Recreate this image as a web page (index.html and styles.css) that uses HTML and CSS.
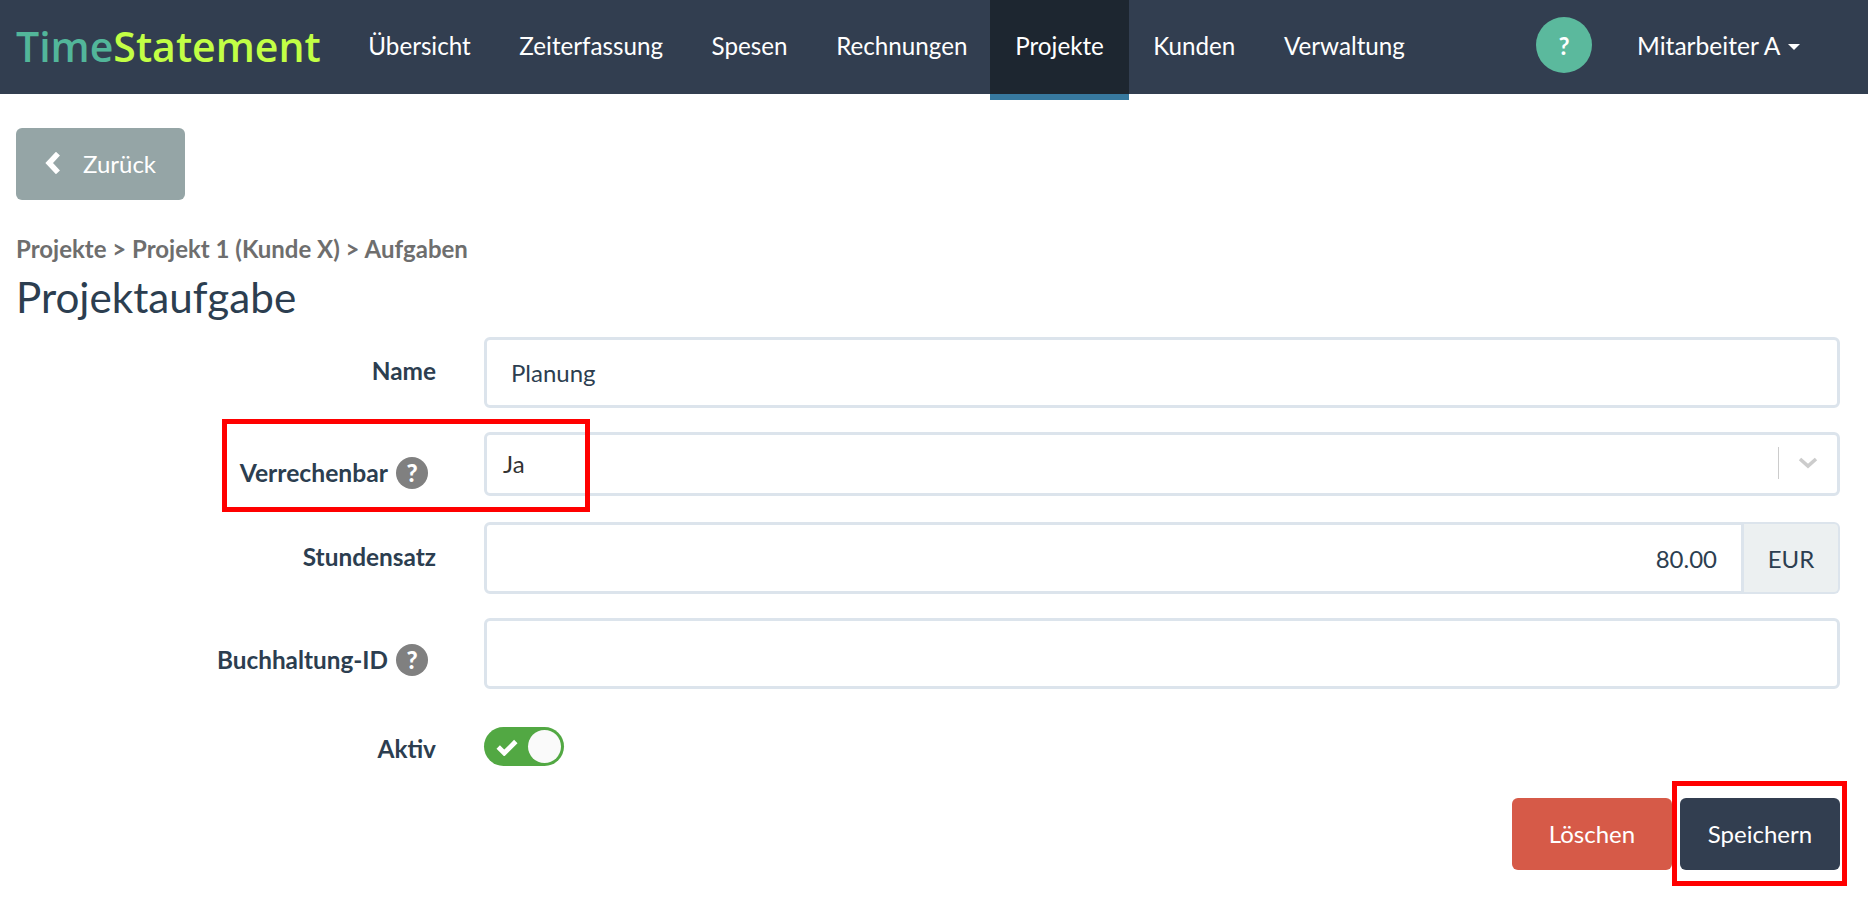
FILE: index.html
```html
<!DOCTYPE html>
<html lang="de">
<head>
<meta charset="utf-8">
<title>TimeStatement</title>
<link rel="stylesheet" href="styles.css">
</head>
<body>
<header class="navbar">
  <a class="brand"><span class="brand-a">Time</span><span class="brand-b">Statement</span></a>
  <nav class="nav">
    <a class="nav-item">Übersicht</a>
    <a class="nav-item">Zeiterfassung</a>
    <a class="nav-item">Spesen</a>
    <a class="nav-item">Rechnungen</a>
    <a class="nav-item active">Projekte</a>
    <a class="nav-item">Kunden</a>
    <a class="nav-item">Verwaltung</a>
  </nav>
  <div class="nav-right">
    <span class="help-round">?</span>
    <a class="user">Mitarbeiter A <span class="caret"></span></a>
  </div>
</header>
<main class="page">
  <a class="btn-back">
    <svg class="back-icon" viewBox="0 0 14 20"><path d="M11.5 1.5 L3.5 10 L11.5 18.5" fill="none" stroke="#fff" stroke-width="5"/></svg>
    <span class="back-text">Zurück</span>
  </a>
  <div class="crumbs">Projekte &gt; Projekt 1 (Kunde X) &gt; Aufgaben</div>
  <h1 class="title">Projektaufgabe</h1>
  <form class="form">
    <div class="row row-name">
      <label class="label">Name</label>
      <div class="control"><input class="input" type="text" value="Planung"></div>
    </div>
    <div class="row row-select">
      <label class="label label-help label-select">Verrechenbar <span class="help-dot">?</span></label>
      <div class="control">
        <div class="select">
          <span class="select-value">Ja</span>
          <span class="select-sep"></span>
          <svg class="select-chevron" viewBox="0 0 20 12"><path d="M2 2 L10 9 L18 2" fill="none" stroke="#ccc" stroke-width="3.6"/></svg>
        </div>
      </div>
    </div>
    <div class="row row-rate">
      <label class="label label-rate">Stundensatz</label>
      <div class="control group">
        <input class="input input-right" type="text" value="80.00">
        <span class="addon">EUR</span>
      </div>
    </div>
    <div class="row row-id">
      <label class="label label-help label-id">Buchhaltung-ID <span class="help-dot">?</span></label>
      <div class="control"><input class="input" type="text"></div>
    </div>
    <div class="row row-toggle">
      <label class="label">Aktiv</label>
      <div class="control">
        <div class="toggle">
          <svg class="toggle-check" viewBox="0 0 20 16"><path d="M2 8 L7.5 13.5 L18 3" fill="none" stroke="#fff" stroke-width="4.4"/></svg>
          <span class="toggle-knob"></span>
        </div>
      </div>
    </div>
    <div class="actions">
      <button class="btn btn-danger" type="button">Löschen</button>
      <button class="btn btn-primary" type="button">Speichern</button>
    </div>
  </form>
</main>
<div class="mark mark-select"></div>
<div class="mark mark-save"></div>
</body>
</html>
```
FILE: styles.css
```css
* { box-sizing: border-box; }
html, body { margin: 0; height: 100%; overflow: hidden; background: #fff; }
body { font-family: Lato, "Liberation Sans", sans-serif; font-size: 24px; color: #2c3e50; position: relative; }

.navbar { display: flex; height: 94px; background: #323e50; color: #fff; font-size: 24.2px; }
.brand { width: 344px; padding: 0 0 0 16px; font-family: "Open Sans", sans-serif; font-weight: 600; font-size: 41px; line-height: 93px; white-space: nowrap; }
.brand-a { color: #52b69a; }
.brand-b { color: #c2ff45; }
.nav { display: flex; align-items: flex-start; }
.nav-item { height: 100px; padding: 0 24.3px; line-height: 92px; border-bottom: 6px solid transparent; white-space: nowrap; }
.nav-item.active { background: #1d2630; border-bottom-color: #37799f; padding: 0 25px; margin-left: -1.5px; }
.nav-right { display: flex; align-items: center; margin-left: auto; padding-right: 68px; }
.help-round { width: 56px; height: 56px; border-radius: 50%; background: #5bb99d; display: flex; align-items: center; justify-content: center; font-size: 24px; font-weight: 700; margin-right: 45px; margin-top: -4px; }
.user { display: flex; align-items: center; white-space: pre; margin-top: -3px; font-size: 24.6px; }
.caret { width: 0; height: 0; border: 6px solid transparent; border-top-color: #fff; border-bottom: 0; margin-left: 2px; margin-top: 3px; }

.page { padding: 34px 28px 0 16px; }
.btn-back { display: flex; align-items: center; width: 169px; height: 72px; padding-left: 29px; background: #95a5a6; border-radius: 6px; color: #fff; }
.back-icon { width: 16px; height: 22px; margin-right: 22px; margin-top: -3px; }
.back-text { margin-top: -2px; }
.crumbs { margin-top: 34px; color: #6e6e6e; font-weight: 700; line-height: 30px; }
.title { margin: 8px 0 0; font-size: 42.2px; font-weight: 400; line-height: 50px; color: #2c3e50; }

.form { margin-top: 15px; }
.row { display: flex; }
.row-name { margin-bottom: 24px; }
.row-select { margin-bottom: 26px; }
.row-rate { margin-bottom: 24px; }
.row-id { margin-bottom: 38px; }
.row-toggle { margin-bottom: 32px; }
.label { flex: 0 0 420px; text-align: right; font-weight: 700; font-size: 24.4px; color: #2c3e50; line-height: 68px; white-space: nowrap; }
.label-rate { line-height: 70px; }
.label-help { padding-right: 8px; display: flex; justify-content: flex-end; align-items: center; gap: 8px; }
.label-select { height: 62px; padding-top: 20px; font-size: 24.7px; }
.label-id { height: 70px; padding-top: 14px; font-size: 24.3px; }
.control { flex: 1; margin-left: 48px; }
.input { display: block; width: 100%; height: 71px; padding: 0 24px; border: 3px solid #dce4ec; border-radius: 6px; font: inherit; color: #2c3e50; background: #fff; outline: none; }
.input-right { text-align: right; border-radius: 6px 0 0 6px; }
.group { display: flex; }
.group .input { flex: 1; height: 72px; }
.addon { width: 96px; height: 72px; display: flex; align-items: center; justify-content: center; background: #ecf0f1; border: 2px solid #dce4ec; border-left: 0; border-radius: 0 6px 6px 0; }
.select { display: flex; align-items: center; height: 64px; border: 3px solid #dce4ec; border-radius: 6px; padding: 0 0 2px 16px; color: #333; }
.select-value { flex: 1; }
.select-sep { width: 1px; height: 32px; background: #ccc; }
.select-chevron { width: 20px; height: 12px; margin: 0 19px 0 19px; }
.row-toggle .label { line-height: 44px; height: 39px; }
.toggle { position: relative; display: flex; align-items: center; width: 80px; height: 39px; border-radius: 20px; background: #52a843; padding-left: 12px; }
.toggle-check { width: 22px; height: 18px; }
.toggle-knob { position: absolute; right: 3px; top: 3px; width: 33px; height: 33px; border-radius: 50%; background: #fafafa; }
.help-dot { width: 32px; height: 32px; border-radius: 50%; background: #808080; color: #fff; font-size: 24px; font-weight: 900; line-height: 32px; text-align: center; flex: none; }

.actions { display: flex; justify-content: flex-end; gap: 8px; }
.btn { width: 160px; height: 72px; border: 0; border-radius: 6px; font: inherit; color: #fff; padding: 0 0 2px; }
.btn-danger { background: #d65a48; }
.btn-primary { background: #323e50; }

.mark { position: absolute; border: 5px solid #f00; }
.mark-select { left: 222px; top: 419px; width: 368px; height: 93px; }
.mark-save { left: 1672px; top: 781px; width: 175px; height: 105px; }
```
